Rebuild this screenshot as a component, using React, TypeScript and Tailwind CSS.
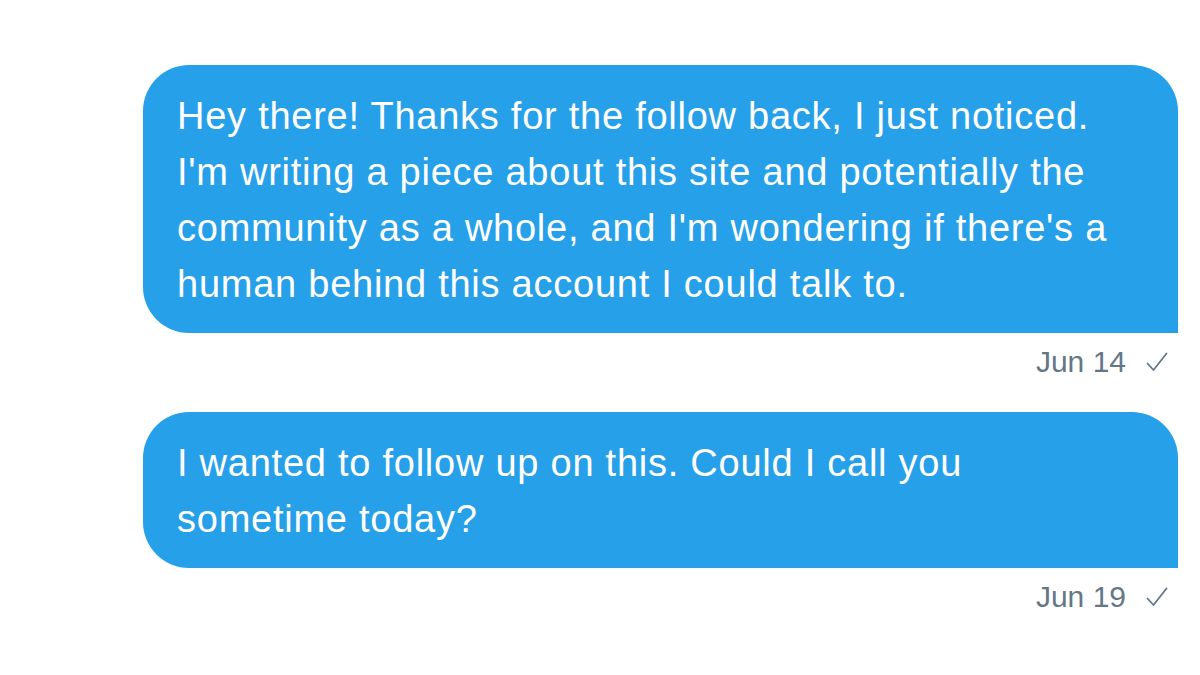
import React from "react";

const FONT = { fontFamily: '"Liberation Sans", Arial, sans-serif' };

function Check() {
  return (
    <svg width="22" height="22" viewBox="0 0 22 22" fill="none" className="text-[#657786]">
      <path d="M1.5 12.5 L7.5 19 L20.5 2.5" stroke="currentColor" strokeWidth="1.8" strokeLinecap="round" strokeLinejoin="round" />
    </svg>
  );
}

function Message({ lines, date }: { lines: string[]; date: string }) {
  return (
    <div className="flex flex-col items-stretch">
      <div className="rounded-[46px] rounded-br-none bg-[#27a0ea] px-[34px] pb-[21px] pt-[23px] text-[38px] leading-[56px] tracking-[0.75px] text-white">
        {lines.map((l, i) => (
          <div key={i} className="whitespace-nowrap">{l}</div>
        ))}
      </div>
      <div className="mt-[12px] flex h-[34px] items-center justify-end gap-[20px] pr-[10px] text-[30px] leading-[34px] text-[#657786]">
        <span>{date}</span>
        <Check />
      </div>
    </div>
  );
}

export default function App() {
  return (
    <div className="h-[675px] w-[1200px] bg-white pl-[143px] pr-[22px] pt-[65px]" style={FONT}>
      <div className="flex flex-col gap-[33px]">
        <Message
          lines={[
            "Hey there! Thanks for the follow back, I just noticed.",
            "I'm writing a piece about this site and potentially the",
            "community as a whole, and I'm wondering if there's a",
            "human behind this account I could talk to.",
          ]}
          date="Jun 14"
        />
        <Message
          lines={["I wanted to follow up on this. Could I call you", "sometime today?"]}
          date="Jun 19"
        />
      </div>
    </div>
  );
}
